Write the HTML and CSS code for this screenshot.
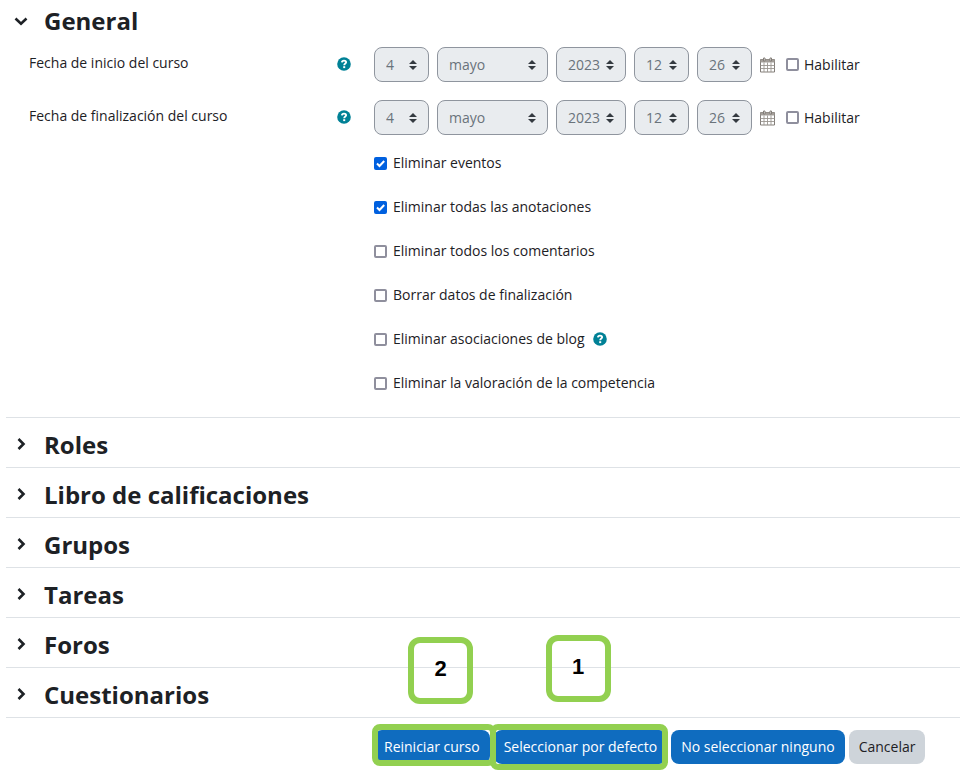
FILE: index.html
```html
<!DOCTYPE html>
<html lang="es">
  <head>
    <meta charset="UTF-8" />
    <meta name="viewport" content="width=device-width, initial-scale=1.0" />
    <title>Reiniciar curso</title>
    <link rel="stylesheet" href="styles.css">
  </head>
  <body>
    <!-- Shared icons -->
    <svg class="sprite" aria-hidden="true">
      <symbol id="icon-help" viewBox="0 0 14 14">
        <circle cx="7" cy="7" r="6.800" fill="#008196" />
        <path d="M4.900 5.400C5 4.200 5.900 3.600 7 3.600c1.200 0 2.100.7 2.100 1.700C9.100 6.600 7.200 6.500 7.200 8.200" fill="none" stroke="#fff" stroke-width="1.900" />
        <rect x="6.200" y="9.200" width="2" height="1.900" fill="#fff" />
      </symbol>
      <symbol id="icon-calendar" viewBox="0 0 15 16">
        <path d="M.5 2.500h14v12.500H.5z" fill="#fff" stroke="#837e79" />
        <path d="M.5 2.500h14v3H.5z" fill="#a39e99" />
        <path d="M.5 8.500h14M.5 11.500h14M4 5.500v9.500M7.500 5.500v9.500M11 5.500v9.500" fill="none" stroke="#9b9691" stroke-width=".9" />
        <path d="M3.500 1h1.500v3H3.500zM10 1h1.500v3H10z" fill="#fff" stroke="#837e79" />
      </symbol>
      <symbol id="icon-right" viewBox="0 0 14 14">
        <path d="M4.500 1l5 5-5 5" fill="none" stroke="#1d2125" stroke-width="2.600" />
      </symbol>
      <symbol id="icon-down" viewBox="0 0 14 14">
        <path d="M1.500 4.500l5.500 5.200 5.500-5.200" fill="none" stroke="#1d2125" stroke-width="2.600" />
      </symbol>
    </svg>

    <form class="reset-form">
      <section class="section section-open">
        <h3 class="section-title">
          <button type="button" class="toggle" aria-expanded="true">
            <svg class="chevron"><use href="#icon-down" /></svg>General
          </button>
        </h3>

        <div class="form-row">
          <div class="form-label">
            <span id="start-label">Fecha de inicio del curso</span>
            <button type="button" class="help" aria-label="Ayuda"><svg><use href="#icon-help" /></svg></button>
          </div>
          <div class="date-fields" role="group" aria-labelledby="start-label">
            <select class="select" aria-label="Día" disabled><option>4</option></select>
            <select class="select select-month" aria-label="Mes" disabled><option>mayo</option></select>
            <select class="select select-year" aria-label="Año" disabled><option>2023</option></select>
            <select class="select" aria-label="Hora" disabled><option>12</option></select>
            <select class="select" aria-label="Minuto" disabled><option>26</option></select>
            <button type="button" class="calendar" aria-label="Calendario"><svg><use href="#icon-calendar" /></svg></button>
            <label class="check check-enable"><input type="checkbox" />Habilitar</label>
          </div>
        </div>

        <div class="form-row">
          <div class="form-label">
            <span id="end-label">Fecha de finalización del curso</span>
            <button type="button" class="help" aria-label="Ayuda"><svg><use href="#icon-help" /></svg></button>
          </div>
          <div class="date-fields" role="group" aria-labelledby="end-label">
            <select class="select" aria-label="Día" disabled><option>4</option></select>
            <select class="select select-month" aria-label="Mes" disabled><option>mayo</option></select>
            <select class="select select-year" aria-label="Año" disabled><option>2023</option></select>
            <select class="select" aria-label="Hora" disabled><option>12</option></select>
            <select class="select" aria-label="Minuto" disabled><option>26</option></select>
            <button type="button" class="calendar" aria-label="Calendario"><svg><use href="#icon-calendar" /></svg></button>
            <label class="check check-enable"><input type="checkbox" />Habilitar</label>
          </div>
        </div>

        <div class="check-list">
          <div class="check-row"><label class="check"><input type="checkbox" checked />Eliminar eventos</label></div>
          <div class="check-row"><label class="check"><input type="checkbox" checked />Eliminar todas las anotaciones</label></div>
          <div class="check-row"><label class="check"><input type="checkbox" />Eliminar todos los comentarios</label></div>
          <div class="check-row"><label class="check"><input type="checkbox" />Borrar datos de finalización</label></div>
          <div class="check-row">
            <label class="check"><input type="checkbox" />Eliminar asociaciones de blog</label>
            <button type="button" class="help" aria-label="Ayuda"><svg><use href="#icon-help" /></svg></button>
          </div>
          <div class="check-row"><label class="check"><input type="checkbox" />Eliminar la valoración de la competencia</label></div>
        </div>
      </section>

      <section class="section">
        <h3 class="section-title"><button type="button" class="toggle" aria-expanded="false"><svg class="chevron"><use href="#icon-right" /></svg>Roles</button></h3>
      </section>
      <section class="section">
        <h3 class="section-title"><button type="button" class="toggle" aria-expanded="false"><svg class="chevron"><use href="#icon-right" /></svg>Libro de calificaciones</button></h3>
      </section>
      <section class="section">
        <h3 class="section-title"><button type="button" class="toggle" aria-expanded="false"><svg class="chevron"><use href="#icon-right" /></svg>Grupos</button></h3>
      </section>
      <section class="section">
        <h3 class="section-title"><button type="button" class="toggle" aria-expanded="false"><svg class="chevron"><use href="#icon-right" /></svg>Tareas</button></h3>
      </section>
      <section class="section">
        <h3 class="section-title"><button type="button" class="toggle" aria-expanded="false"><svg class="chevron"><use href="#icon-right" /></svg>Foros</button></h3>
      </section>
      <section class="section">
        <h3 class="section-title"><button type="button" class="toggle" aria-expanded="false"><svg class="chevron"><use href="#icon-right" /></svg>Cuestionarios</button></h3>
      </section>

      <div class="actions">
        <div class="step step-reset">
          <button type="submit" class="btn btn-primary">Reiniciar curso</button>
          <span class="step-number">2</span>
        </div>
        <div class="step step-default">
          <button type="button" class="btn btn-primary">Seleccionar por defecto</button>
          <span class="step-number">1</span>
        </div>
        <button type="button" class="btn btn-primary">No seleccionar ninguno</button>
        <button type="button" class="btn btn-secondary">Cancelar</button>
      </div>
    </form>
  </body>
</html>
```

FILE: styles.css
```css
/* General Styles */
* {
  box-sizing: border-box;
}

body {
  margin: 0;
  background-color: #fff;
  color: #1d2125;
  font-family: "Open Sans", "Noto Sans", sans-serif;
  font-size: 14px;
  line-height: 20px;
}

button,
select {
  font: inherit;
}

.sprite {
  display: none;
}

.reset-form {
  padding-left: 6px;
}

/* Sections */
.section {
  border-bottom: 1px solid #dee2e6;
}

.section-title {
  display: flex;
  align-items: center;
  height: 49px;
  margin: 0;
  padding: 4px 0 0 8px;
  font-size: 24px;
  line-height: 32px;
}

.section-open .section-title {
  height: 47px;
  padding-bottom: 10px;
}

.toggle {
  display: flex;
  align-items: center;
  gap: 16px;
  padding: 0;
  border: none;
  background: none;
  color: inherit;
  cursor: pointer;
}

.chevron {
  width: 14px;
  height: 14px;
}

/* Date rows */
.form-row {
  display: grid;
  grid-template-columns: 345px 1fr;
  margin-bottom: 18px;
  padding-left: 23px;
}

.form-row + .check-list {
  margin-top: -12px;
}

.form-label {
  display: flex;
  align-items: flex-start;
  justify-content: space-between;
  padding: 6px 23px 0 0;
}

.help,
.calendar {
  display: flex;
  padding: 0;
  border: none;
  background: none;
  cursor: pointer;
}

.help svg {
  width: 14px;
  height: 14px;
}

.form-label .help {
  padding-top: 4px;
}

.date-fields {
  display: flex;
  align-items: center;
  gap: 8px;
}

.select {
  width: 55px;
  height: 35px;
  padding: 0 10px 0 11px;
  border: 1px solid #8f959e;
  border-radius: 8px;
  appearance: none;
  background: #e9ecef url("data:image/svg+xml,%3Csvg xmlns='http://www.w3.org/2000/svg' viewBox='0 0 4 5'%3E%3Cpath fill='%23343a40' d='M2 0L0 2h4zm0 5L0 3h4z'/%3E%3C/svg%3E") no-repeat right 11px center / 8px 10px;
  color: #6a737b;
  opacity: 1;
}

.select-month {
  width: 111px;
}

.select-year {
  width: 70px;
}

.calendar svg {
  width: 15px;
  height: 16px;
}

/* Checkboxes */
.check {
  display: flex;
  align-items: center;
  gap: 6px;
}

.check-enable {
  gap: 5px;
  margin-left: 3px;
}

.check input {
  width: 13px;
  height: 13px;
  margin: 0;
  border: 2px solid #8f8f9d;
  border-radius: 2px;
  appearance: none;
  background: #fff;
}

.check input:checked {
  border: none;
  background: #0060df url("data:image/svg+xml,%3Csvg xmlns='http://www.w3.org/2000/svg' viewBox='0 0 13 13'%3E%3Cpath fill='none' stroke='white' stroke-width='2' d='M3 6.500l2.500 2.500L10.200 4'/%3E%3C/svg%3E");
}

.check-list {
  padding: 0 0 12px 368px;
}

.check-row {
  display: flex;
  align-items: center;
  gap: 8px;
  height: 44px;
}

/* Buttons */
.actions {
  display: flex;
  flex-wrap: wrap;
  gap: 4px;
  padding: 12px 0 6px 368px;
}

.btn {
  height: 34px;
  padding: 0 10px;
  border: none;
  border-radius: 8px;
  cursor: pointer;
}

.btn-primary {
  background-color: #0f6cbf;
  color: #fff;
}

.btn-secondary {
  background-color: #ced4da;
  color: #1d2125;
}

/* Highlighted steps */
.step {
  position: relative;
}

.step::after {
  content: "";
  position: absolute;
  inset: -6px -6px -2px -2px;
  border: 6px solid #92d050;
  border-radius: 8px;
  pointer-events: none;
}

.step-default::after {
  inset: -6px -1px -6px -4px;
}

.step-number {
  position: absolute;
  bottom: 60px;
  left: 34px;
  display: flex;
  align-items: center;
  justify-content: center;
  width: 65px;
  height: 67px;
  padding-bottom: 4px;
  border: 6px solid #92d050;
  border-radius: 12px;
  color: #000;
  font: bold 22px "Liberation Sans", sans-serif;
}

.step-default .step-number {
  left: 52px;
  bottom: 62px;
}
```
